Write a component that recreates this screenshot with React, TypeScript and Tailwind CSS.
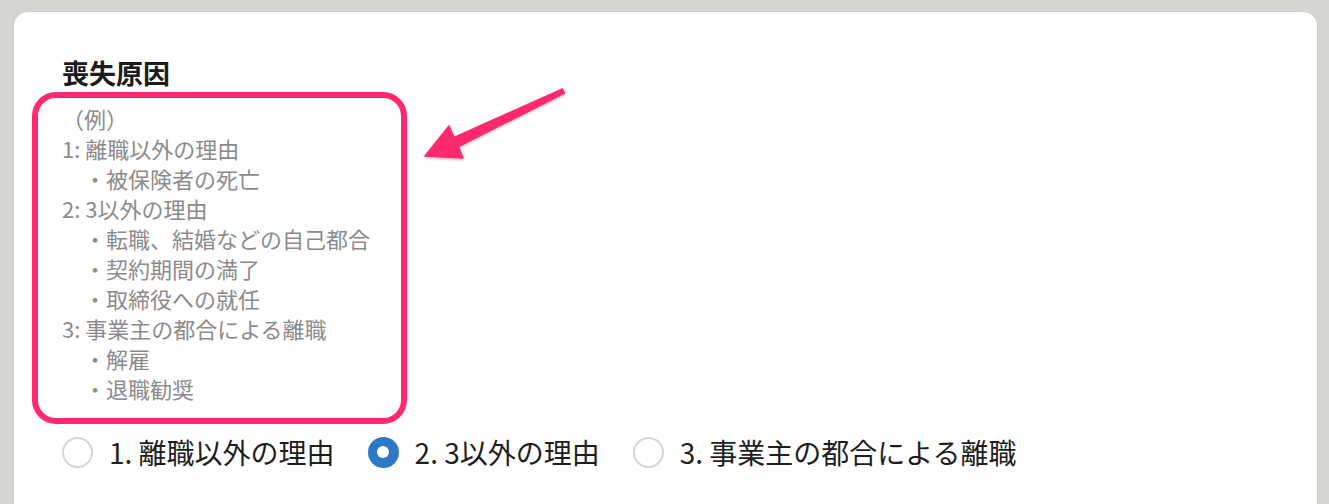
import React from "react";

const font = { fontFamily: '"Noto Sans CJK JP", "Noto Sans", sans-serif' };

const lines: string[] = [
  "（例）",
  "1: 離職以外の理由",
  "　・被保険者の死亡",
  "2: 3以外の理由",
  "　・転職、結婚などの自己都合",
  "　・契約期間の満了",
  "　・取締役への就任",
  "3: 事業主の都合による離職",
  "　・解雇",
  "　・退職勧奨",
];

function Radio({ checked, label }: { checked?: boolean; label: string }) {
  return (
    <label className="flex items-center gap-[16px]">
      {checked ? (
        <span className="flex h-[31px] w-[31px] items-center justify-center rounded-full bg-[#2f78c6]">
          <span className="h-[12px] w-[12px] rounded-full bg-white" />
        </span>
      ) : (
        <span className="h-[31px] w-[31px] rounded-full border-2 border-[#d6d6d4] bg-white" />
      )}
      <span className="text-[28px] leading-[36px] text-[#1e1e1e]">{label}</span>
    </label>
  );
}

export default function App() {
  return (
    <div className="h-screen overflow-hidden bg-[#d6d5d1] pl-[14px] pr-3 pt-3" style={font}>
      <div className="min-h-[600px] rounded-[14px] bg-white pl-12 pt-[43px] shadow-[0_0_2px_rgba(0,0,0,0.08)]">
        <h2 className="text-[27px] font-bold leading-[36px] text-[#1c1c1c]">喪失原因</h2>
        <div className="relative mt-[12px] w-[340px] text-[22px] leading-[30px] text-[#8b8b8b]">
          {lines.map((l, i) => (
            <div key={i} className="whitespace-pre">
              {l}
            </div>
          ))}
          <div className="pointer-events-none absolute left-[-30px] top-[-11px] h-[332px] w-[375px] rounded-[24px] border-[6px] border-[#ff2a6d]" />
          <svg
            className="pointer-events-none absolute left-[348px] top-[-24px] h-[90px] w-[170px] overflow-visible"
            viewBox="410 80 170 90"
          >
            <defs>
              <filter id="sh" x="-20%" y="-20%" width="140%" height="160%">
                <feDropShadow dx="0" dy="1.5" stdDeviation="1" floodColor="#000" floodOpacity="0.25" />
              </filter>
            </defs>
            <polygon
              points="425,157 449,127 454,138.5 562.5,90 564.5,94 458.5,147.5 463,159"
              fill="#ff2a6d"
              stroke="#ff2a6d"
              strokeWidth="1.5"
              strokeLinejoin="round"
              filter="url(#sh)"
            />
          </svg>
        </div>
        <div className="mt-[31px] flex items-center gap-[33px]">
          <Radio label="1. 離職以外の理由" />
          <Radio checked label="2. 3以外の理由" />
          <Radio label="3. 事業主の都合による離職" />
        </div>
      </div>
    </div>
  );
}
